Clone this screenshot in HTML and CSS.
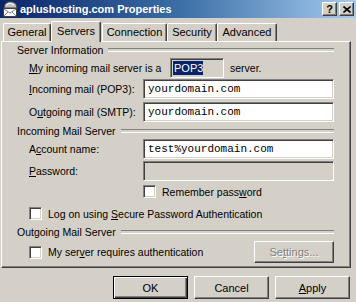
FILE: index.html
```html
<!DOCTYPE html>
<html lang="en">
<head>
  <meta charset="UTF-8">
  <title>aplushosting.com Properties</title>
  <link rel="stylesheet" href="styles.css">
</head>
<body>

  <!-- Title bar -->
  <header class="titlebar">
    <svg class="app-icon" width="16" height="16" viewBox="0 0 16 16">
      <path d="M2 7 L3 3 L6 1 L11 1 L14 3 L15 7 Z" fill="#c0c0c0" stroke="#404040" stroke-width="1"/>
      <path d="M4 4 L8 2 L12 4" fill="none" stroke="#fff" stroke-width="1"/>
      <rect x="1.5" y="7.5" width="13" height="8" fill="#fff" stroke="#404040"/>
      <path d="M2 8 L8 12 L14 8 M2 15 L6 11 M14 15 L10 11" fill="none" stroke="#808080"/>
    </svg>
    <h1>aplushosting.com Properties</h1>
    <div class="caption-buttons">
      <span class="cap-btn">?</span>
      <span class="cap-btn">
        <svg width="8" height="7" viewBox="0 0 8 7"><path d="M0.5 0.5 L7.5 6.5 M7.5 0.5 L0.5 6.5" stroke="#000" stroke-width="1.6"/></svg>
      </span>
    </div>
  </header>

  <!-- Tabs -->
  <nav class="tabs">
    <span class="tab tab-general">General</span>
    <span class="tab tab-servers active">Servers</span>
    <span class="tab tab-connection">Connection</span>
    <span class="tab tab-security">Security</span>
    <span class="tab tab-advanced">Advanced</span>
  </nav>

  <!-- Servers page -->
  <main class="panel">
    <div class="group-head head-info"><span>Server Information</span></div>

    <div class="row row-type">
      <span class="label"><u>M</u>y incoming mail server is a</span>
      <span class="type-box"><span class="selected">POP3</span></span>
      <span class="after">server.</span>
    </div>
    <div class="row row-in">
      <span class="label field-label"><u>I</u>ncoming mail (POP3):</span>
      <span class="field">yourdomain.com</span>
    </div>
    <div class="row row-out">
      <span class="label field-label">O<u>u</u>tgoing mail (SMTP):</span>
      <span class="field">yourdomain.com</span>
    </div>

    <div class="group-head head-incoming"><span>Incoming Mail Server</span></div>

    <div class="row row-account">
      <span class="label field-label">A<u>c</u>count name:</span>
      <span class="field">test%yourdomain.com</span>
    </div>
    <div class="row row-password">
      <span class="label field-label"><u>P</u>assword:</span>
      <span class="field"></span>
    </div>
    <div class="row row-remember">
      <span class="checkbox"></span>
      <span>Remember pass<u>w</u>ord</span>
    </div>
    <div class="row row-spa">
      <span class="checkbox"></span>
      <span>Log on using <u>S</u>ecure Password Authentication</span>
    </div>

    <div class="group-head head-outgoing"><span>Outgoing Mail Server</span></div>

    <div class="row row-auth">
      <span class="checkbox"></span>
      <span class="auth-text">My ser<u>v</u>er requires authentication</span>
      <span class="button disabled">Se<u>t</u>tings...</span>
    </div>
  </main>

  <!-- Dialog buttons -->
  <footer class="dialog-buttons">
    <span class="button default">OK</span>
    <span class="button">Cancel</span>
    <span class="button"><u>A</u>pply</span>
  </footer>

</body>
</html>
```

FILE: styles.css
```css
* {
  margin: 0;
  padding: 0;
  box-sizing: border-box;
}

body {
  width: 356px;
  height: 302px;
  overflow: hidden;
  background: #d4d0c8;
  color: #000;
  font-family: 'Liberation Sans', Arial, sans-serif;
  font-size: 10.5px;
}

u {
  text-decoration: underline;
  text-underline-offset: 1px;
}

/* Title bar */
.titlebar {
  height: 18px;
  display: flex;
  align-items: center;
  background: linear-gradient(to right, #0a246a 0%, #3a6ea5 50%, #a6caf0 100%);
}

.app-icon {
  margin-left: 2px;
  flex: none;
}

.titlebar h1 {
  margin-left: 2px;
  font-size: 11px;
  font-weight: bold;
  color: #fff;
  white-space: nowrap;
}

.caption-buttons {
  margin-left: auto;
  margin-right: 2px;
  display: flex;
  gap: 2px;
}

.cap-btn {
  width: 15px;
  height: 14px;
  display: flex;
  align-items: center;
  justify-content: center;
  background: #d4d0c8;
  border: 1px solid;
  border-color: #fff #404040 #404040 #fff;
  box-shadow: inset -1px -1px #808080;
  font-weight: bold;
  font-size: 11px;
  line-height: 1;
}

/* Tabs */
.tabs {
  height: 20px;
  margin-top: 3px;
  padding-left: 3px;
  display: flex;
  align-items: flex-end;
  position: relative;
  z-index: 2;
}

.tab {
  height: 18px;
  display: flex;
  align-items: center;
  justify-content: center;
  padding-bottom: 1px;
  font-size: 11px;
  border-top: 1px solid #fff;
  border-left: 1px solid #fff;
  border-right: 1px solid #404040;
  border-radius: 2px 2px 0 0;
  box-shadow: inset -1px 0 #808080;
}

.tab-general { width: 48px; }
.tab-servers { width: 50px; }
.tab-connection { width: 65px; margin-left: 1px; }
.tab-security { width: 50px; }
.tab-advanced { width: 60px; }

.tab.active {
  height: 21px;
  margin-bottom: -1px;
  padding-bottom: 3px;
  background: #d4d0c8;
}

/* Panel */
.panel {
  height: 227px;
  margin: 0 5px 0 1px;
  padding: 1px 16px 0 15px;
  border: 1px solid;
  border-color: #fff #404040 #404040 #fff;
  box-shadow: inset -1px -1px #808080;
}

.group-head {
  height: 14px;
  display: flex;
  align-items: center;
  gap: 5px;
}

.group-head::after {
  content: "";
  flex: 1;
  height: 2px;
  border-top: 1px solid #808080;
  border-bottom: 1px solid #fff;
}

.head-incoming { margin-top: 2px; }
.head-outgoing { margin-top: 5px; }

.row {
  display: flex;
  align-items: center;
  margin-left: 12px;
  white-space: nowrap;
}

.row-type { height: 20px; margin-top: 1px; }
.row-in { height: 20px; margin-top: 1px; }
.row-out { height: 20px; margin-top: 3px; }
.row-account { height: 20px; margin-top: 1px; }
.row-password { height: 20px; margin-top: 2px; }
.row-remember { height: 13px; margin-top: 4px; margin-left: 126px; }
.row-spa { height: 13px; margin-top: 9px; }
.row-auth { height: 22px; margin-top: 2px; }

.field-label {
  width: 114px;
}

.row-type .label {
  width: 141px;
}

.type-box,
.field {
  height: 20px;
  border: 1px solid;
  border-color: #808080 #fff #fff #808080;
  box-shadow: inset 1px 1px #404040, inset -1px -1px #d4d0c8;
}

.type-box {
  width: 54px;
  padding: 2px;
  display: flex;
  align-items: center;
  font-size: 11px;
}

.selected {
  background: #0a246a;
  color: #fff;
  padding: 1px 0 1px 1px;
}

.after {
  margin-left: 6px;
}

.field {
  flex: 1;
  padding-left: 4px;
  display: flex;
  align-items: center;
  background: #fff;
  font-family: 'Liberation Mono', 'Courier New', monospace;
  font-size: 11px;
}

.row-password .field {
  background: #d4d0c8;
}

.checkbox {
  width: 13px;
  height: 13px;
  margin-right: 6px;
  flex: none;
  background: #fff;
  border: 1px solid;
  border-color: #808080 #fff #fff #808080;
  box-shadow: inset 1px 1px #404040, inset -1px -1px #d4d0c8;
}

.row-remember .checkbox {
  margin-right: 6px;
}

.button {
  height: 23px;
  width: 75px;
  display: flex;
  align-items: center;
  justify-content: center;
  font-size: 11px;
  border: 1px solid;
  border-color: #fff #404040 #404040 #fff;
  box-shadow: inset -1px -1px #808080;
}

.row-auth .button {
  width: 80px;
  height: 22px;
  margin-left: auto;
}

.button.disabled {
  color: #808080;
  text-shadow: 1px 1px #fff;
}

.button.default {
  border: 1px solid #000;
  box-shadow: inset 1px 1px #fff, inset -1px -1px #404040, inset -2px -2px #808080;
}

/* Dialog buttons */
.dialog-buttons {
  margin-top: 8px;
  margin-right: 6px;
  display: flex;
  justify-content: flex-end;
  gap: 6px;
}
```
